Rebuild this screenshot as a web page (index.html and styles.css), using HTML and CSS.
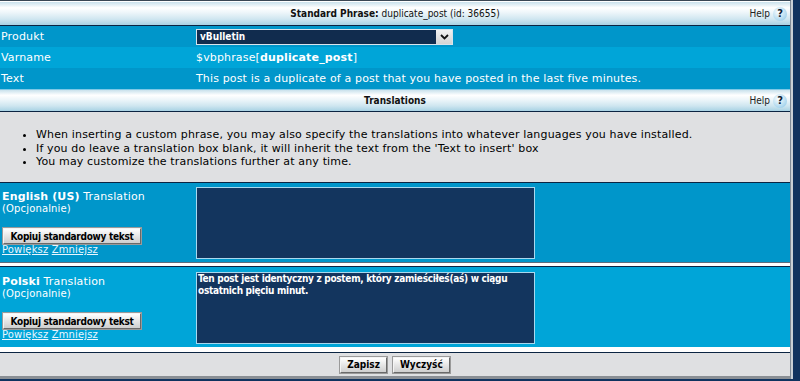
FILE: index.html
```html
<!DOCTYPE html>
<html lang="pl">
<head>
    <meta charset="UTF-8">
    <title>Edit Phrase</title>
    <link rel="stylesheet" href="styles.css">
</head>
<body>
    <div class="panel">
        <div class="thead">
            <span></span>
            <span class="title"><b>Standard Phrase:</b> duplicate_post (id: 36655)</span>
            <span class="help">Help <i>?</i></span>
        </div>

        <div class="row alt1">
            <div class="label">Produkt</div>
            <div class="value">
                <div class="select">
                    <span>vBulletin</span>
                    <span class="arrow">
                        <svg width="9" height="6" viewBox="0 0 9 6"><path d="M1 1 L4.5 4.5 L8 1" fill="none" stroke="#111" stroke-width="1.8"/></svg>
                    </span>
                </div>
            </div>
        </div>
        <div class="row alt2">
            <div class="label">Varname</div>
            <div class="value">$vbphrase[<b>duplicate_post</b>]</div>
        </div>
        <div class="row alt1">
            <div class="label">Text</div>
            <div class="value">This post is a duplicate of a post that you have posted in the last five minutes.</div>
        </div>

        <div class="thead thead-sub">
            <span></span>
            <span class="title"><b>Translations</b></span>
            <span class="help">Help <i>?</i></span>
        </div>

        <div class="notes">
            <ul>
                <li>When inserting a custom phrase, you may also specify the translations into whatever languages you have installed.</li>
                <li>If you do leave a translation box blank, it will inherit the text from the 'Text to insert' box</li>
                <li>You may customize the translations further at any time.</li>
            </ul>
        </div>

        <!-- one block per installed language -->
        <div class="lang alt1">
            <div class="lang-info">
                <div class="lang-name"><b>English (US)</b> Translation</div>
                <div class="small">(Opcjonalnie)</div>
                <button class="btn copy-btn">Kopiuj standardowy tekst</button>
                <div class="small links"><a href="#">Powiększ</a> <a href="#">Zmniejsz</a></div>
            </div>
            <div class="value">
                <div class="textarea"></div>
            </div>
        </div>

        <div class="lang alt2 lang-sep">
            <div class="lang-info">
                <div class="lang-name"><b>Polski</b> Translation</div>
                <div class="small">(Opcjonalnie)</div>
                <button class="btn copy-btn">Kopiuj standardowy tekst</button>
                <div class="small links"><a href="#">Powiększ</a> <a href="#">Zmniejsz</a></div>
            </div>
            <div class="value">
                <div class="textarea">Ten post jest identyczny z postem, który zamieściłeś(aś) w ciągu ostatnich pięciu minut.</div>
            </div>
        </div>

        <div class="tfoot">
            <button class="btn">Zapisz</button>
            <button class="btn">Wyczyść</button>
        </div>
    </div>
</body>
</html>
```

FILE: styles.css
```css
body {
    margin: 0;
    background: #10335f;
    font-family: "DejaVu Sans", Verdana, sans-serif;
    font-size: 11px;
    letter-spacing: 0.15px;
    color: #fff;
}
.panel {
    width: 790px;
    background: #fff;
    border-top: 1px solid #3a4754;
    border-right: 1px solid #7f8b97;
    border-bottom: 3px solid #8a8f95;
    box-shadow: 2px 0 0 #c9d0d6;
    padding-top: 1px;
}
.thead {
    display: grid;
    grid-template-columns: 1fr auto 1fr;
    align-items: center;
    height: 23px;
    color: #111;
    font-family: "DejaVu Sans Condensed", "Liberation Sans", sans-serif;
    font-size: 10px;
    letter-spacing: 0;
    background: linear-gradient(#c9e1ec, #ffffff 25%, #eef6fa 45%, #cfe6f0 75%, #a8d2e4);
    border-bottom: 1px solid #0b2442;
}
.thead-sub {
    height: 21px;
    border-top: 1px solid #7ec8e6;
}
.help {
    justify-self: end;
    display: flex;
    align-items: center;
    gap: 3px;
    padding-right: 3px;
    color: #222;
}
.help i {
    display: inline-block;
    width: 14px;
    height: 14px;
    border-radius: 50%;
    background: radial-gradient(circle at 40% 35%, #ffffff, #a9d6ee 70%, #7dbbdc);
    color: #123;
    font-style: normal;
    font-weight: bold;
    font-size: 11px;
    line-height: 14px;
    text-align: center;
}
.row {
    display: grid;
    grid-template-columns: 195px 1fr;
    height: 21px;
    align-items: center;
}
.alt1 {
    background: #0096ca;
}
.alt2 {
    background: #00a5d8;
}
.label {
    padding-left: 1px;
}
.value {
    padding-left: 1px;
}
.select {
    display: flex;
    justify-content: space-between;
    align-items: center;
    width: 252px;
    height: 14px;
    background: #112c4e;
    border: 1px solid #d9e4ec;
    font-family: "DejaVu Sans Condensed", "Liberation Sans", sans-serif;
    font-size: 10px;
    font-weight: bold;
    letter-spacing: 0;
    padding-left: 3px;
}
.arrow {
    display: flex;
    align-items: center;
    justify-content: center;
    width: 16px;
    height: 14px;
    background: linear-gradient(#f2f2f2, #d4d4d4);
}
.notes {
    background: #dfe0e2;
    color: #000;
    padding: 16px 0 13.5px;
    border-bottom: 1px solid #0b2442;
}
.notes ul {
    margin: 0;
    padding-left: 36px;
    line-height: 13.5px;
}
.lang {
    display: grid;
    grid-template-columns: 195px 1fr;
    height: 79px;
    border-bottom: 1px solid #5c6d7e;
}
.lang-sep {
    margin-top: 3px;
    border-top: 1px solid #0b2442;
    border-bottom: none;
    height: 80px;
}
.lang-info {
    padding: 7px 0 0 2px;
}
.lang-sep .lang-info {
    padding-top: 8px;
}
.lang-name {
    line-height: 13px;
}
.small {
    font-size: 10px;
    line-height: 12px;
}
.links a {
    color: #eaf6ff;
}
.btn {
    display: block;
    margin: 13px 0 0 1px;
    height: 16px;
    padding: 0 6px;
    font-family: "DejaVu Sans Condensed", "Liberation Sans", sans-serif;
    font-size: 10px;
    font-weight: bold;
    letter-spacing: -0.3px;
    white-space: nowrap;
    color: #000;
    background: linear-gradient(#ffffff, #e6e6e6 50%, #cfcfcf);
    border: 1px solid;
    border-color: #f4f4f4 #6a6a6a #6a6a6a #f4f4f4;
    outline: 1px solid #9a9a9a;
}
.copy-btn {
    width: 138px;
    padding: 0;
}
.lang .value {
    padding: 4px 0 0 1px;
}
.lang-sep .value {
    padding-top: 5px;
}
.textarea {
    width: 335px;
    height: 70px;
    background: #13355e;
    border: 1px solid #a9d8ee;
    font-family: "DejaVu Sans Condensed", "Liberation Sans", sans-serif;
    font-size: 10px;
    font-weight: bold;
    letter-spacing: -0.3px;
    line-height: 12px;
    padding: 0 1px;
}
.tfoot {
    display: flex;
    justify-content: center;
    gap: 6px;
    height: 23px;
    align-items: center;
    margin-top: 5px;
    background: #dfe0e2;
    border-top: 1px solid #0b2442;
}
.tfoot .btn {
    margin: 0;
    padding: 0 6px;
    letter-spacing: 0;
}
```
